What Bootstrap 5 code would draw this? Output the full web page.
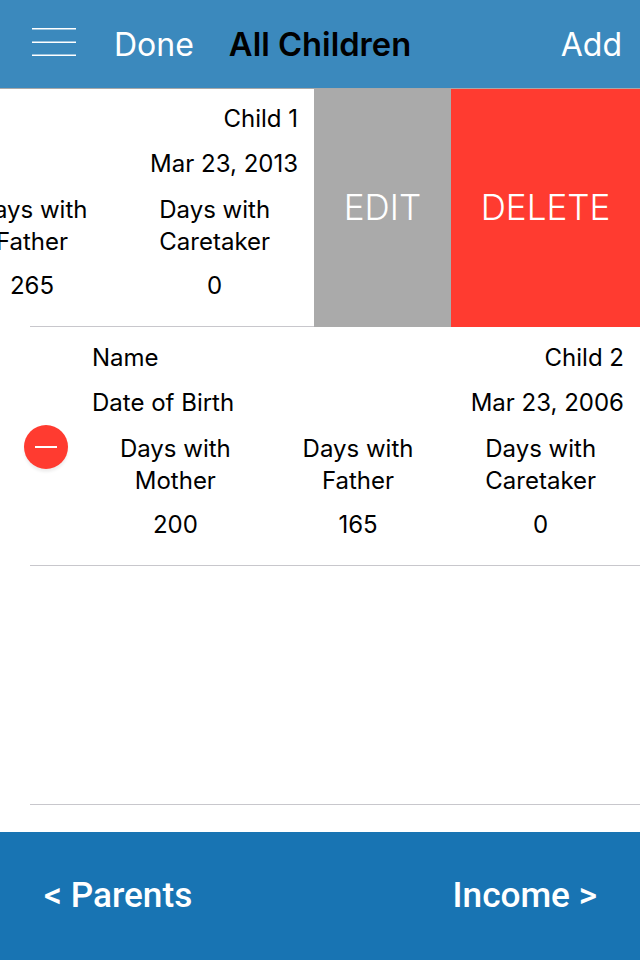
<!DOCTYPE html>
<html lang="en">
<head>
  <meta charset="UTF-8">
  <title>All Children</title>
  <meta name="viewport" content="width=device-width, initial-scale=1">
  <link href="https://cdn.jsdelivr.net/npm/bootstrap@5.3.6/dist/css/bootstrap.min.css" rel="stylesheet">
  <style>
    body {
      background: #fff;
      color: #000;
      font-family: Inter, "Liberation Sans", sans-serif;
      font-size: 24px;
      height: 960px;
      overflow: hidden;
    }

    .app-shell { height: 960px; }

    .top-bar {
      height: 89px;
      background: #3b89bd;
      border-bottom: 1px solid #a8a8a8;
      padding: 2px 18px 0 32px;
      color: #fff;
      font-size: 32px;
    }

    .menu-icon { width: 44px; height: 34px; margin: -2px 38px 0 0; }
    .top-title { color: #000; font-weight: 600; font-size: 32.7px; margin-left: 35px; }

    .child-list { flex: 1 1 auto; }

    .child-row {
      height: 239px;
      position: relative;
      overflow: hidden;
    }
    .row-line {
      position: absolute;
      left: 30px;
      right: 0;
      bottom: 0;
      height: 1px;
      background: #c8c7cc;
    }

    .row-body {
      flex: 0 0 548px;
      width: 548px;
      margin-left: 84px;
      padding-top: 8px;
    }
    .row-swiped { height: 238px; }
    .row-swiped .row-body { margin-left: -242px; padding-top: 7px; }

    .info-line { height: 45.5px; padding: 0 8px; align-items: center; }
    .day-cols { margin-top: 7px; }
    .day-col { flex: 1 1 0; text-align: center; line-height: 32px; }
    .day-num { height: 45px; line-height: 45px; margin-top: 5px; }

    .swipe-edit, .swipe-delete {
      position: absolute;
      top: 0;
      bottom: 0;
      padding-bottom: 2px;
      color: #fff;
      font-size: 35px;
      font-weight: 300;
      z-index: 2;
    }
    .swipe-edit { left: 314px; width: 137px; background: #aaa; }
    .swipe-delete { left: 451px; right: 0; background: #ff3b30; }

    .minus-btn {
      position: absolute;
      left: 24px;
      top: 98px;
      width: 44px;
      height: 44px;
      border-radius: 50%;
      background: #ff3b30;
      box-shadow: 0 3px 3px rgba(0, 0, 0, .07);
    }
    .minus-btn span { width: 22px; height: 2px; background: #fff; }

    .bottom-bar {
      height: 128px;
      background: #1874b3;
      padding: 0 43px 2px 44px;
      color: #fff;
      font-family: Roboto, "Liberation Sans", sans-serif;
      font-size: 35.2px;
      font-weight: 500;
    }
  </style>
</head>
<body>

<div class="app-shell d-flex flex-column">
  <div class="top-bar d-flex align-items-center flex-shrink-0">
    <svg class="menu-icon" viewBox="0 0 44 34" aria-hidden="true">
      <rect x="0" y="1" width="44" height="1.5" fill="#fff"/>
      <rect x="0" y="14.5" width="44" height="1.5" fill="#fff"/>
      <rect x="0" y="27.5" width="44" height="1.5" fill="#fff"/>
    </svg>
    <span>Done</span>
    <span class="top-title">All Children</span>
    <span class="ms-auto">Add</span>
  </div>

  <div class="child-list">
    <div class="child-row row-swiped d-flex">
      <div class="row-body">
        <div class="info-line d-flex justify-content-between"><span>Name</span><span>Child 1</span></div>
        <div class="info-line d-flex justify-content-between"><span>Date of Birth</span><span>Mar 23, 2013</span></div>
        <div class="day-cols d-flex">
          <div class="day-col">Days with<br>Mother<div class="day-num">100</div></div>
          <div class="day-col">Days with<br>Father<div class="day-num">265</div></div>
          <div class="day-col">Days with<br>Caretaker<div class="day-num">0</div></div>
        </div>
      </div>
      <div class="swipe-edit d-flex align-items-center justify-content-center">EDIT</div>
      <div class="swipe-delete d-flex align-items-center justify-content-center">DELETE</div>
      <div class="row-line"></div>
    </div>

    <div class="child-row d-flex">
      <div class="minus-btn d-flex align-items-center justify-content-center"><span></span></div>
      <div class="row-body">
        <div class="info-line d-flex justify-content-between"><span>Name</span><span>Child 2</span></div>
        <div class="info-line d-flex justify-content-between"><span>Date of Birth</span><span>Mar 23, 2006</span></div>
        <div class="day-cols d-flex">
          <div class="day-col">Days with<br>Mother<div class="day-num">200</div></div>
          <div class="day-col">Days with<br>Father<div class="day-num">165</div></div>
          <div class="day-col">Days with<br>Caretaker<div class="day-num">0</div></div>
        </div>
      </div>
      <div class="row-line"></div>
    </div>

    <div class="child-row"><div class="row-line"></div></div>
  </div>

  <div class="bottom-bar d-flex align-items-center justify-content-between flex-shrink-0">
    <span>&lt; Parents</span>
    <span>Income &gt;</span>
  </div>
</div>

<script src="https://cdn.jsdelivr.net/npm/bootstrap@5.3.6/dist/js/bootstrap.bundle.min.js"></script>
</body>
</html>
